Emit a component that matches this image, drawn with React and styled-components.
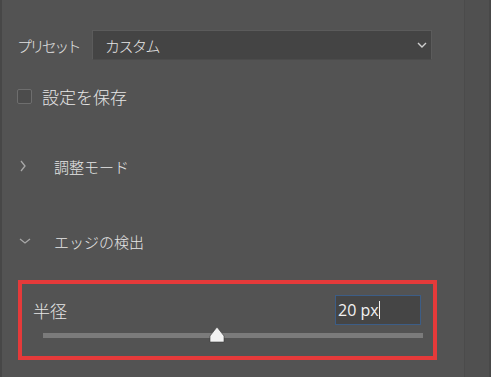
import React from "react";
import styled, { createGlobalStyle } from "styled-components";

const GlobalStyle = createGlobalStyle`
  html, body {
    margin: 0;
    padding: 0;
    background: #535353;
  }
  body {
    font-family: "Noto Sans CJK JP", "Noto Sans", sans-serif;
    font-weight: 300;
    color: #e6e6e6;
  }
`;

const App = () => (
  <>
    <GlobalStyle />
    <Layout>
      <Panel>
        <PresetRow>
          <Label>プリセット</Label>
          <Select>
            <SelectText>カスタム</SelectText>
            <svg width="12" height="8" viewBox="0 0 12 8">
              <path d="M2 2 L6 6 L10 2" fill="none" stroke="#cfcfcf" strokeWidth="1.4" />
            </svg>
          </Select>
        </PresetRow>

        <CheckRow>
          <CheckBox />
          <CheckLabel>設定を保存</CheckLabel>
        </CheckRow>

        <SectionRow top={50}>
          <Toggle>
            <svg width="10" height="14" viewBox="0 0 10 14">
              <path d="M3 2 L7 7 L3 12" fill="none" stroke="#a8a8a8" strokeWidth="1.3" />
            </svg>
          </Toggle>
          <SectionTitle>調整モード</SectionTitle>
        </SectionRow>

        <SectionRow top={53}>
          <Toggle>
            <svg width="14" height="10" viewBox="0 0 14 10">
              <path d="M2 3 L7 7 L12 3" fill="none" stroke="#a8a8a8" strokeWidth="1.3" />
            </svg>
          </Toggle>
          <SectionTitle>エッジの検出</SectionTitle>
        </SectionRow>

        <Highlight>
          <RadiusRow>
            <RadiusLabel>半径</RadiusLabel>
            <ValueBox>
              20 px<Caret />
            </ValueBox>
          </RadiusRow>
          <Track>
            <Thumb style={{ left: `${((217 - 43) / 380) * 100}%` }}>
              <svg width="18" height="18" viewBox="0 0 18 18">
                <path d="M9 1 L16 10 L16 16 L2 16 L2 10 Z" fill="#f2f2f2" stroke="#3a3a3a" strokeWidth="0.6" />
              </svg>
            </Thumb>
          </Track>
        </Highlight>
      </Panel>
      <SideStrip />
    </Layout>
  </>
);

const Layout = styled.div`
  display: flex;
  width: 491px;
  height: 377px;
  overflow: hidden;
`;

const Panel = styled.div`
  width: 464px;
  border-left: 2px solid #474747;
  padding-top: 30px;
  box-sizing: border-box;
`;

const SideStrip = styled.div`
  flex: 1;
  background: #505050;
  border-left: 1px solid #4b4b4b;
  border-right: 2px solid #484848;
`;

const PresetRow = styled.div`
  display: flex;
  align-items: center;
  height: 30px;
  padding-left: 15px;
`;

const Label = styled.span`
  font-size: 15px;
  letter-spacing: -2.6px;
  color: #e2e2e2;
  width: 75px;
`;

const Select = styled.div`
  display: flex;
  align-items: center;
  justify-content: space-between;
  width: 340px;
  height: 30px;
  box-sizing: border-box;
  padding: 0 3px 0 12px;
  background: #444444;
  border: 1px solid #5b5b5b;
  border-bottom-color: #4b4b4b;
`;

const SelectText = styled.span`
  font-size: 15px;
  letter-spacing: -1.5px;
  color: #e6e6e6;
`;

const CheckRow = styled.div`
  display: flex;
  align-items: center;
  gap: 10px;
  margin-top: 27px;
  padding-left: 15px;
  height: 18px;
`;

const CheckBox = styled.div`
  width: 13px;
  height: 13px;
  border: 1px solid #6e6e6e;
  border-radius: 2px;
  background: #4c4c4c;
`;

const CheckLabel = styled.span`
  font-size: 17px;
  color: #e6e6e6;
`;

const SectionRow = styled.div`
  display: flex;
  align-items: center;
  margin-top: ${({ top }) => top}px;
  height: 22px;
  padding-left: 16px;
`;

const Toggle = styled.div`
  width: 36px;
  display: flex;
  align-items: center;
`;

const SectionTitle = styled.span`
  font-size: 15px;
  color: #e6e6e6;
`;

const Highlight = styled.div`
  margin: 28px 0 0 16px;
  width: 419px;
  height: 80px;
  box-sizing: border-box;
  border: 4px solid #e53a3a;
  padding: 11px 12px 0 21px;
`;

const RadiusRow = styled.div`
  display: flex;
  align-items: center;
  justify-content: space-between;
`;

const RadiusLabel = styled.span`
  font-size: 17px;
  color: #e6e6e6;
  margin-left: -10px;
`;

const ValueBox = styled.div`
  display: flex;
  align-items: center;
  width: 86px;
  height: 30px;
  box-sizing: border-box;
  padding-left: 2px;
  background: #454545;
  border: 1px solid #3c5d86;
  font-family: "Open Sans", "Noto Sans", sans-serif;
  font-weight: 400;
  font-size: 16px;
  color: #f2f2f2;
`;

const Caret = styled.span`
  width: 1px;
  height: 18px;
  background: #f2f2f2;
`;

const Track = styled.div`
  position: relative;
  margin-top: 8px;
  width: 380px;
  height: 5px;
  background: #7b7b7b;
`;

const Thumb = styled.div`
  position: absolute;
  top: -8px;
  margin-left: -9px;
  width: 18px;
  height: 18px;
`;

export default App;
